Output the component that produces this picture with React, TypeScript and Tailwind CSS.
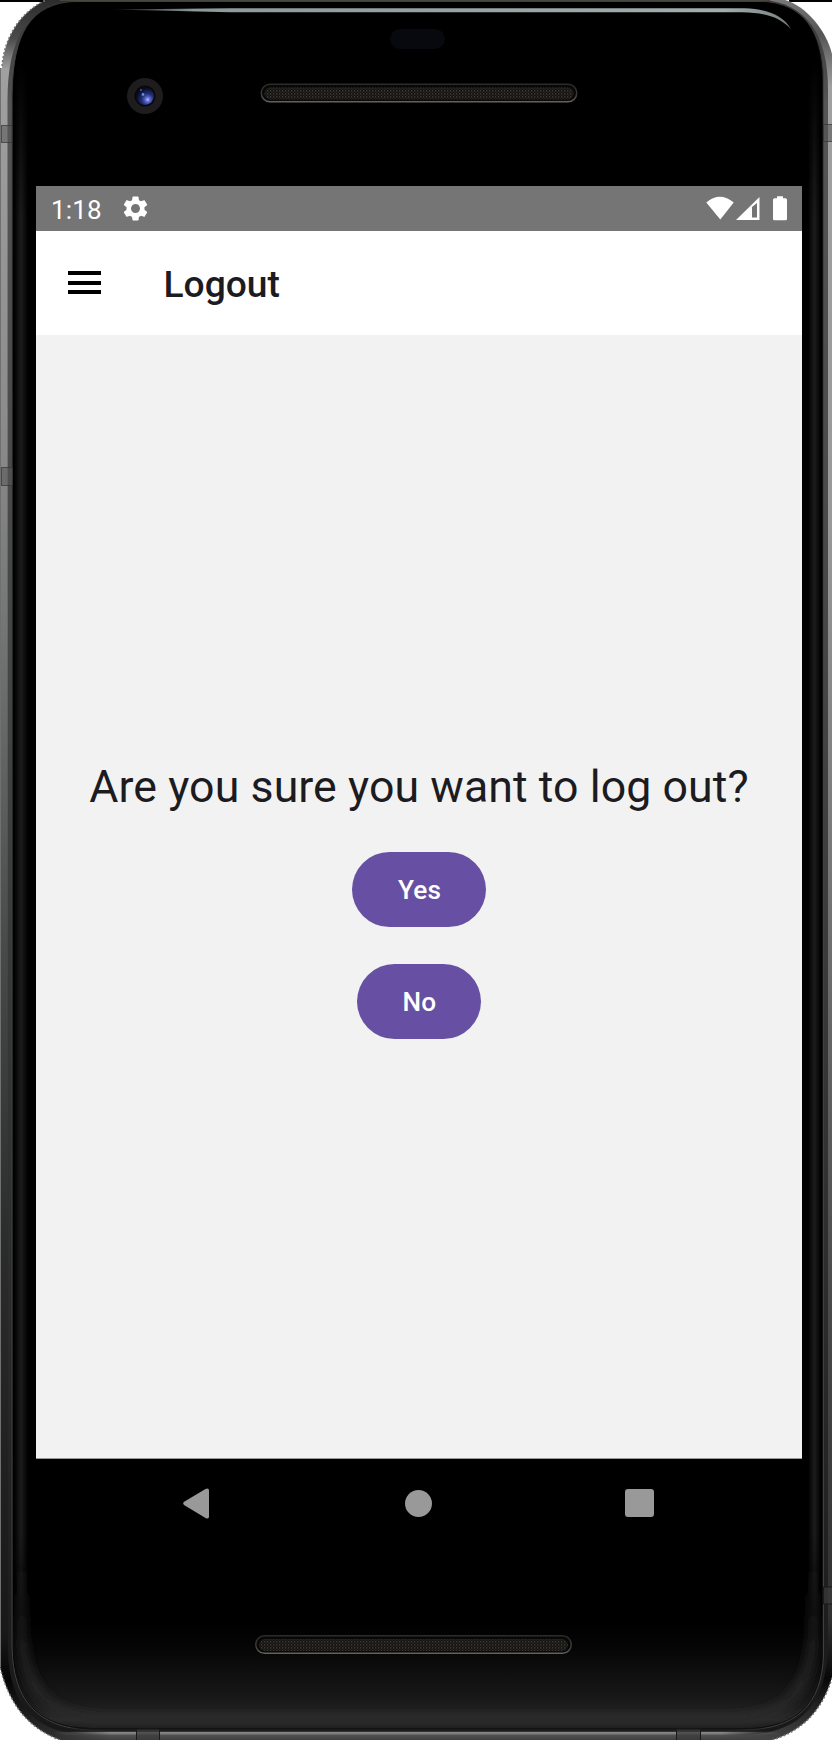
import React from "react";

function Speaker({ x, y }: { x: number; y: number }) {
  return (
    <g>
      <rect x={x + 0.75} y={y + 0.75} width="315.5" height="17.5" rx="8.75" fill="#080808" stroke="url(#speakerRim)" strokeWidth="1.5" />
      <rect x={x + 4} y={y + 4} width="309" height="12" rx="6" fill="url(#mesh)" />
    </g>
  );
}

function DeviceFrame() {
  return (
    <svg className="absolute inset-0" width="832" height="1740" viewBox="0 0 832 1740" aria-hidden="true">
      <defs>
        <linearGradient id="metal" gradientUnits="userSpaceOnUse" x1="0" y1="0" x2="0" y2="1740">
          <stop offset="0" stopColor="#2c2c2c" />
          <stop offset="0.022" stopColor="#4a4a4a" />
          <stop offset="0.04" stopColor="#a0a0a0" />
          <stop offset="0.24" stopColor="#8c8c8c" />
          <stop offset="0.36" stopColor="#747676" />
          <stop offset="0.55" stopColor="#474848" />
          <stop offset="0.72" stopColor="#2a2b2b" />
          <stop offset="0.94" stopColor="#181818" />
          <stop offset="0.965" stopColor="#050505" />
          <stop offset="1" stopColor="#303030" />
        </linearGradient>
        <linearGradient id="metalRight" gradientUnits="userSpaceOnUse" x1="0" y1="0" x2="0" y2="1740">
          <stop offset="0" stopColor="#777" />
          <stop offset="0.02" stopColor="#555" />
          <stop offset="0.05" stopColor="#a0a0a0" />
          <stop offset="0.3" stopColor="#999" />
          <stop offset="0.5" stopColor="#777" />
          <stop offset="0.75" stopColor="#4a4a4a" />
          <stop offset="0.93" stopColor="#303030" />
          <stop offset="0.965" stopColor="#080808" />
          <stop offset="1" stopColor="#444" />
        </linearGradient>
        <linearGradient id="innerMetal" gradientUnits="userSpaceOnUse" x1="0" y1="0" x2="0" y2="1740">
          <stop offset="0" stopColor="#333" />
          <stop offset="0.06" stopColor="#555" />
          <stop offset="0.4" stopColor="#444" />
          <stop offset="0.75" stopColor="#2c2c2c" />
          <stop offset="0.95" stopColor="#1c1c1c" />
          <stop offset="1" stopColor="#181818" />
        </linearGradient>
        <linearGradient id="glow">
          <stop offset="0" stopColor="#000" />
          <stop offset="0.5" stopColor="#1c1c1c" />
          <stop offset="1" stopColor="#000" />
        </linearGradient>
        <linearGradient id="glowFade" x1="0" y1="0" x2="0" y2="1">
          <stop offset="0" stopColor="#000" />
          <stop offset="0.1" stopColor="#fff" />
          <stop offset="0.92" stopColor="#fff" />
          <stop offset="1" stopColor="#000" />
        </linearGradient>
        <mask id="glowMask">
          <rect x="0" y="60" width="832" height="1600" fill="url(#glowFade)" />
        </mask>
        <linearGradient id="chin" gradientUnits="userSpaceOnUse" x1="0" y1="1625" x2="0" y2="1728">
          <stop offset="0" stopColor="#000" />
          <stop offset="0.3" stopColor="#080808" />
          <stop offset="0.75" stopColor="#1a1a1a" />
          <stop offset="0.92" stopColor="#2a2a2a" />
          <stop offset="1" stopColor="#1b1b1b" />
        </linearGradient>
        <linearGradient id="cornerGlow" gradientUnits="userSpaceOnUse" x1="0" y1="1560" x2="0" y2="1725">
          <stop offset="0" stopColor="#242424" stopOpacity="0" />
          <stop offset="0.5" stopColor="#242424" stopOpacity="0.8" />
          <stop offset="1" stopColor="#2b2b2b" />
        </linearGradient>
        <linearGradient id="bottomMetal" x1="0" y1="0" x2="0" y2="1">
          <stop offset="0" stopColor="#111" />
          <stop offset="0.28" stopColor="#222" />
          <stop offset="0.36" stopColor="#888" />
          <stop offset="0.5" stopColor="#777" />
          <stop offset="0.6" stopColor="#505050" />
          <stop offset="1" stopColor="#404040" />
        </linearGradient>
        <linearGradient id="sideFade">
          <stop offset="0" stopColor="#fff" stopOpacity="0" />
          <stop offset="0.08" stopColor="#fff" />
          <stop offset="0.92" stopColor="#fff" />
          <stop offset="1" stopColor="#fff" stopOpacity="0" />
        </linearGradient>
        <mask id="bottomMask">
          <rect x="52" y="1720" width="728" height="20" fill="url(#sideFade)" />
        </mask>
        <linearGradient id="gleam" gradientUnits="userSpaceOnUse" x1="112" y1="0" x2="792" y2="0">
          <stop offset="0" stopColor="#66706f" stopOpacity="0.3" />
          <stop offset="0.12" stopColor="#8d999b" />
          <stop offset="0.9" stopColor="#a3adae" />
          <stop offset="1" stopColor="#777f80" />
        </linearGradient>
        <linearGradient id="speakerRim" x1="0" y1="0" x2="0" y2="1">
          <stop offset="0" stopColor="#2b2b2b" />
          <stop offset="0.6" stopColor="#3a3a3a" />
          <stop offset="1" stopColor="#65625e" />
        </linearGradient>
        <pattern id="mesh" width="3" height="3" patternUnits="userSpaceOnUse">
          <rect width="3" height="3" fill="#12110f" />
          <rect width="1.3" height="1.6" fill="#3d3a34" />
          <rect x="1.5" y="1.5" width="1.2" height="1.5" fill="#2a2722" />
        </pattern>
        <radialGradient id="lens" cx="0.65" cy="0.7" r="0.65">
          <stop offset="0" stopColor="#b3c0ff" />
          <stop offset="0.22" stopColor="#5565c8" />
          <stop offset="0.5" stopColor="#222e76" />
          <stop offset="1" stopColor="#080b20" />
        </radialGradient>
        <filter id="soften" filterUnits="userSpaceOnUse" x="0" y="1500" width="832" height="240">
          <feGaussianBlur stdDeviation="5" />
        </filter>
        <clipPath id="faceClip">
          <path d="M13 90C14 35 30 3 76 2H760C802 3 821 28 822 80V1655C821 1705 795 1728 745 1728H90C38 1727 14 1700 13 1647Z" />
        </clipPath>
      </defs>

      <path d="M0 0H46V2H0ZM789 0H832V2H789Z" fill="#000" />
      <path d="M0 68H2C4 40 18 13 46 0H410V1740H60C28 1728 9 1704 0 1667Z" fill="url(#metal)" />
      <path d="M410 0H785C806 6 826 30 832 54V1677C823 1709 803 1731 772 1740H410Z" fill="url(#metalRight)" />
      <path d="M2 66C4 40 18 13 46 0M832 1678C823 1709 803 1731 772 1740M60 1740C28 1728 9 1704 0 1667" fill="none" stroke="#777" strokeWidth="1.5" strokeDasharray="2 2" />
      <path d="M0.5 68V1667" stroke="#707070" strokeWidth="1" />
      <path d="M7.5 100C7.5 38 28 3 76 0H760C806 2 828 34 828 90V1650C825 1705 800 1733 745 1735H90C35 1734 9 1705 8 1650Z" fill="url(#innerMetal)" />
      <path d="M12 95C13 36 30 4 76 1.5H760C804 3 823 31 823.5 80V1655C822 1705 796 1729 745 1730H90C37 1728 13 1700 12 1647Z" fill="#101010" stroke="#404044" strokeWidth="1" />
      <path d="M13 90C14 35 30 3 76 2H760C802 3 821 28 822 80V1655C821 1705 795 1728 745 1728H90C38 1727 14 1700 13 1647Z" fill="#000" />

      <g clipPath="url(#faceClip)">
        <rect x="13" y="1625" width="809" height="103" fill="url(#chin)" />
        <g mask="url(#glowMask)">
          <rect x="14" y="50" width="14" height="1620" fill="url(#glow)" className="mix-blend-screen" />
          <rect x="808" y="50" width="13" height="1620" fill="url(#glow)" className="mix-blend-screen" />
        </g>
        <path d="M22 1560V1640C26 1692 52 1716 96 1720H739C783 1716 809 1692 813 1640V1560" fill="none" stroke="url(#cornerGlow)" strokeWidth="10" filter="url(#soften)" />
      </g>
      <path d="M52 1728H780V1740H52Z" fill="url(#bottomMetal)" mask="url(#bottomMask)" />
      <path d="M60 0.5H770" stroke="#45473f" />

      <path d="M112 9.4L230 8.3H745C767 9 783 15 791 29C779 17 767 13 742 12.2H230Z" fill="url(#gleam)" />

      <g fill="#555" fillOpacity="0.55" stroke="#333" strokeOpacity="0.7" strokeWidth="1">
        <rect x="1.5" y="125.5" width="10.5" height="17" />
        <rect x="823.5" y="124.5" width="10" height="17" />
        <rect x="1.5" y="467.5" width="11" height="18" />
      </g>
      <g fill="#3a3a3a" fillOpacity="0.7" stroke="#191919" strokeWidth="1">
        <rect x="823.5" y="1587" width="10" height="17" />
        <rect x="136.5" y="1729" width="23" height="12" />
        <rect x="676.5" y="1729" width="24" height="12" />
      </g>

      <rect x="390" y="29" width="55" height="20" rx="10" fill="#08090f" />
      <Speaker x={260.5} y={83.5} />
      <Speaker x={255} y={1635} />
      <circle cx="145" cy="96" r="18" fill="#1e1c1c" />
      <circle cx="145" cy="96" r="10.5" fill="#08080c" />
      <circle cx="145" cy="96" r="9" fill="url(#lens)" />
      <circle cx="143" cy="94.5" r="1.4" fill="#7182e8" />
      <circle cx="141" cy="90" r="0.8" fill="#8995d9" />
    </svg>
  );
}

function StatusBar() {
  return (
    <div className="flex h-[45px] items-center bg-[#757575] pr-[14px] pl-[15px] text-white">
      <span className="w-[72px] pt-[2px] text-[26px] leading-[30px] tracking-[0.2px]">1:18</span>
      <svg width="25" height="25" viewBox="2 2 20 20" fill="currentColor">
        <path d="M19.14 12.94c.04-.3.06-.61.06-.94 0-.32-.02-.64-.07-.94l2.03-1.58c.18-.14.23-.41.12-.61l-1.92-3.32c-.12-.22-.37-.29-.59-.22l-2.39.96c-.5-.38-1.03-.7-1.62-.94l-.36-2.54c-.04-.24-.24-.41-.48-.41h-3.84c-.24 0-.43.17-.47.41l-.36 2.54c-.59.24-1.13.57-1.62.94l-2.39-.96c-.22-.08-.47 0-.59.22L2.74 8.87c-.12.21-.08.47.12.61l2.03 1.58c-.05.3-.09.63-.09.94s.02.64.07.94l-2.03 1.58c-.18.14-.23.41-.12.61l1.92 3.32c.12.22.37.29.59.22l2.39-.96c.5.38 1.03.7 1.62.94l.36 2.54c.05.24.24.41.48.41h3.84c.24 0 .44-.17.47-.41l.36-2.54c.59-.24 1.13-.56 1.62-.94l2.39.96c.22.08.47 0 .59-.22l1.92-3.32c.12-.22.07-.47-.12-.61l-2.01-1.58zM12 15.6c-1.98 0-3.6-1.62-3.6-3.6s1.62-3.6 3.6-3.6 3.6 1.62 3.6 3.6-1.62 3.6-3.6 3.6z" />
      </svg>
      <svg className="-mt-px ml-auto" width="82" height="25" viewBox="0 0 82 25" fill="currentColor">
        <path d="M0.3 6.5Q13.7 -5 27.7 6.5L14.3 23.4Z" />
        <path fillRule="evenodd" d="M30 24L53.5 1V24ZM46 11V21.5H51V7Z" />
        <path d="M71 0.2H77V2.2H79.5Q81 2.2 81 3.7V22.7Q81 24.2 79.5 24.2H68.5Q67 24.2 67 22.7V3.7Q67 2.2 68.5 2.2H71Z" />
      </svg>
    </div>
  );
}

function AppBar() {
  return (
    <header className="flex h-[104px] items-center bg-white pl-8">
      <button className="mb-px flex h-[23px] w-[33px] flex-col justify-between" aria-label="Open menu">
        <span className="h-1 w-full bg-black" />
        <span className="h-1 w-full bg-black" />
        <span className="h-1 w-full bg-black" />
      </button>
      <h1 className="ml-[62.5px] pt-[2px] text-[37.2px] leading-[44px] font-medium text-[#1c1b1f]">Logout</h1>
    </header>
  );
}

function PillButton({ label }: { label: string }) {
  return (
    <button className="flex h-[74.5px] items-center justify-center rounded-full bg-[#6750a4] pt-[3px] pr-[44.7px] pl-[45.7px] text-[26.2px] font-medium tracking-[0.19px] text-white">
      {label}
    </button>
  );
}

export default function App() {
  return (
    <div className="relative h-[1740px] w-[832px] overflow-hidden bg-white font-['Roboto',sans-serif]">
      <DeviceFrame />
      <div className="relative flex h-full flex-col pt-[186px] pr-[30px] pl-9">
        <StatusBar />
        <AppBar />
        <main className="flex h-[1123.5px] flex-col items-center border-b border-[#999] bg-[#f2f2f2] pt-[425px]">
          <p className="text-[44.7px] leading-[55px] tracking-[0.06px] whitespace-nowrap text-[#1c1b1f]">Are you sure you want to log out?</p>
          <div className="mt-[37px] flex flex-col items-center gap-[37.5px]">
            <PillButton label="Yes" />
            <PillButton label="No" />
          </div>
        </main>
        <nav className="flex h-[89px] items-center pl-[147px] text-[#999]">
          <svg width="26" height="31" viewBox="0 0 26 31" fill="currentColor">
            <path d="M0.7 14Q-0.5 15.5 1 17L22.5 30Q26 31.5 26 28.5V2.5Q26 -0.5 22.5 1Z" />
          </svg>
          <span className="ml-[196px] size-[27px] rounded-full bg-[#999]" />
          <span className="ml-[193px] size-[28.5px] rounded-[3px] bg-[#999]" />
        </nav>
      </div>
    </div>
  );
}
